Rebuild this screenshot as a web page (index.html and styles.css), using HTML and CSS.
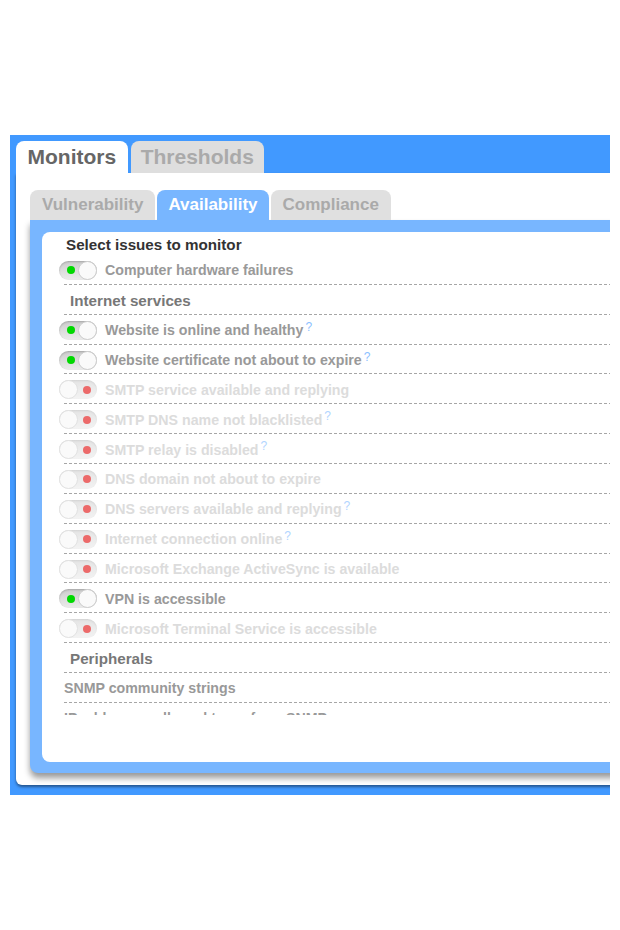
FILE: index.html
```html
<!DOCTYPE html>
<html lang="en">
<head>
    <meta charset="UTF-8">
    <meta name="viewport" content="width=device-width, initial-scale=1.0">
    <title>Monitors - Availability</title>
    <link rel="stylesheet" href="styles.css">
</head>
<body>

<div class="frame">

    <!-- Main tabs -->
    <div class="tabs">
        <div class="tab tab-active">Monitors</div>
        <div class="tab">Thresholds</div>
    </div>

    <div class="panel">

        <!-- Sub tabs -->
        <div class="subtabs">
            <div class="subtab">Vulnerability</div>
            <div class="subtab subtab-active">Availability</div>
            <div class="subtab">Compliance</div>
        </div>

        <div class="subpanel">
            <div class="card">
                <div class="card-body">
                    <h3 class="card-title">Select issues to monitor</h3>
                    <ul class="issues">
                        <li class="issue"><span class="toggle"><span class="toggle-dot"></span><span class="toggle-knob"></span></span>Computer hardware failures</li>
                        <li class="issue group">Internet services</li>
                        <li class="issue"><span class="toggle"><span class="toggle-dot"></span><span class="toggle-knob"></span></span>Website is online and healthy<span class="help">?</span></li>
                        <li class="issue"><span class="toggle"><span class="toggle-dot"></span><span class="toggle-knob"></span></span>Website certificate not about to expire<span class="help">?</span></li>
                        <li class="issue issue-off"><span class="toggle"><span class="toggle-dot"></span><span class="toggle-knob"></span></span>SMTP service available and replying</li>
                        <li class="issue issue-off"><span class="toggle"><span class="toggle-dot"></span><span class="toggle-knob"></span></span>SMTP DNS name not blacklisted<span class="help">?</span></li>
                        <li class="issue issue-off"><span class="toggle"><span class="toggle-dot"></span><span class="toggle-knob"></span></span>SMTP relay is disabled<span class="help">?</span></li>
                        <li class="issue issue-off"><span class="toggle"><span class="toggle-dot"></span><span class="toggle-knob"></span></span>DNS domain not about to expire</li>
                        <li class="issue issue-off"><span class="toggle"><span class="toggle-dot"></span><span class="toggle-knob"></span></span>DNS servers available and replying<span class="help">?</span></li>
                        <li class="issue issue-off"><span class="toggle"><span class="toggle-dot"></span><span class="toggle-knob"></span></span>Internet connection online<span class="help">?</span></li>
                        <li class="issue issue-off"><span class="toggle"><span class="toggle-dot"></span><span class="toggle-knob"></span></span>Microsoft Exchange ActiveSync is available</li>
                        <li class="issue"><span class="toggle"><span class="toggle-dot"></span><span class="toggle-knob"></span></span>VPN is accessible</li>
                        <li class="issue issue-off"><span class="toggle"><span class="toggle-dot"></span><span class="toggle-knob"></span></span>Microsoft Terminal Service is accessible</li>
                        <li class="issue group">Peripherals</li>
                        <li class="issue">SNMP community strings</li>
                        <li class="issue">IP addresses allowed to perform SNMP scans</li>
                    </ul>
                </div>
            </div>
        </div>

    </div>

</div>

</body>
</html>
```

FILE: styles.css
```css
body {
    margin: 0;
    background-color: #fff;
    font-family: "Liberation Sans", Arial, sans-serif;
}
.frame {
    box-sizing: border-box;
    width: 600px;
    margin: 135px 0 0 10px;
    padding: 6px 0 10px 6px;
    background-color: #4199ff;
    overflow: hidden;
}

/* main tabs */
.tabs {
    display: flex;
    gap: 3px;
}
.tab {
    height: 32px;
    line-height: 32px;
    padding: 0 10px;
    border-radius: 8px 8px 0 0;
    background-color: #dedede;
    color: #aaa;
    font-size: 21px;
    font-weight: bold;
}
.tab-active {
    padding: 0 11.5px;
    background-color: #fff;
    color: #666;
}
.panel {
    margin-right: -40px;
    padding: 17px 0 12px 14px;
    background-color: #fff;
    border-radius: 0 0 0 6px;
    box-shadow: 0 2px 3px rgba(0, 0, 0, 0.45);
}

/* sub tabs */
.subtabs {
    display: flex;
    gap: 2px;
}
.subtab {
    height: 30px;
    line-height: 30px;
    padding: 0 12px;
    border-radius: 8px 8px 0 0;
    background-color: #e0e0e0;
    color: #aaa;
    font-size: 17px;
    font-weight: bold;
}
.subtab-active {
    padding: 0 11px;
    background-color: #78b6ff;
    color: #fff;
}
.subpanel {
    padding: 12px 0 11px 12px;
    background-color: #78b6ff;
    border-radius: 0 0 0 8px;
    box-shadow: 0 5px 6px rgba(0, 0, 0, 0.4);
}
.card {
    height: 530px;
    background-color: #fff;
    border-radius: 8px 0 0 8px;
}
.card-body {
    height: 483px;
    padding-left: 22px;
    overflow: hidden;
}
.card-title {
    margin: 0;
    padding: 3px 0 0 2px;
    line-height: 20px;
    font-size: 15.2px;
    color: #333;
}

/* issue list */
.issues {
    list-style: none;
    margin: 0;
    padding: 0;
}
.issue {
    box-sizing: border-box;
    display: flex;
    align-items: center;
    height: 29.86px;
    padding-top: 1px;
    background: linear-gradient(to right, #a6a6a6 3px, transparent 3px) 0 100% / 5px 1px repeat-x;
    font-size: 14.2px;
    font-weight: bold;
    color: #999;
    white-space: nowrap;
}
.group {
    padding-left: 6px;
    font-size: 15.2px;
    color: #777;
}
.issue-off {
    color: #dcdcdc;
}
.help {
    margin: 0 0 0 2px;
    align-self: flex-start;
    padding-top: 4px;
    font-size: 12px;
    font-weight: normal;
    color: #8cc1ff;
}
.issue-off .help {
    color: #b2d5ff;
}

/* toggle switch */
.toggle {
    box-sizing: border-box;
    flex: none;
    display: flex;
    align-items: center;
    justify-content: space-between;
    width: 38px;
    height: 19px;
    margin: 0 8px 0 -5px;
    padding-left: 8px;
    border-radius: 10px;
    background: linear-gradient(#cdcdcd, #ebebeb);
    box-shadow: inset 0 1px 2px rgba(0, 0, 0, 0.2);
}
.toggle-dot {
    width: 8px;
    height: 8px;
    border-radius: 50%;
    background-color: #00d800;
}
.toggle-knob {
    box-sizing: border-box;
    width: 19px;
    height: 19px;
    border-radius: 50%;
    border: 1px solid #cdcdcd;
    background-color: #fafafa;
}
.issue-off .toggle {
    flex-direction: row-reverse;
    padding: 0 6px 0 0;
    background: linear-gradient(#e4e4e4, #f3f3f3);
    box-shadow: inset 0 1px 2px rgba(0, 0, 0, 0.08);
}
.issue-off .toggle-dot {
    background-color: #ec6a6a;
}
.issue-off .toggle-knob {
    border-color: #e2e2e2;
}
```
